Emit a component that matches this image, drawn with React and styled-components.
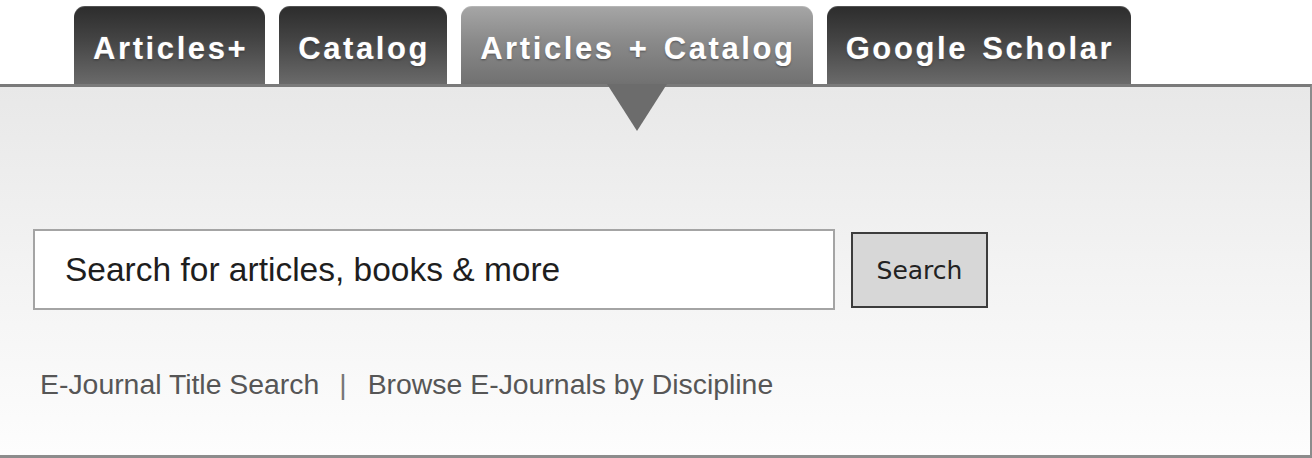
import React, { useState } from "react";
import styled, { createGlobalStyle } from "styled-components";

const GlobalStyle = createGlobalStyle`
  body {
    margin: 0;
    background: #ffffff;
    font-family: "Liberation Sans", Arial, sans-serif;
  }
`;

const Wrapper = styled.div`
  width: 1312px;
  height: 458px;
  overflow: hidden;
`;

const TabBar = styled.div`
  display: flex;
  gap: 14px;
  padding: 6px 0 0 74px;
  height: 84px;
  box-sizing: border-box;
`;

const Tab = styled.div`
  position: relative;
  box-sizing: border-box;
  height: 78px;
  padding: 27px 17px 0 19px;
  border-radius: 11px 11px 0 0;
  background: ${(props) =>
    props.active
      ? "linear-gradient(to bottom, #a6a6a6 0%, #8a8a8a 45%, #717171 100%)"
      : "linear-gradient(to bottom, #2c2c2c 0%, #454545 45%, #6a6a6a 100%)"};
  box-shadow: inset 0 1px 0 rgba(255, 255, 255, 0.18);
  color: #ffffff;
  font-family: "Liberation Sans", Arial, sans-serif;
  font-weight: bold;
  font-size: 31px;
  line-height: 31px;
  letter-spacing: 2.6px;
  word-spacing: 3px;
  white-space: nowrap;
  text-shadow: 0 0 2px rgba(255, 255, 255, 0.35), 0 1px 2px rgba(0, 0, 0, 0.55);
  cursor: pointer;

  &::after {
    content: "";
    display: ${(props) => (props.active ? "block" : "none")};
    position: absolute;
    top: 100%;
    left: 50%;
    margin-left: -30px;
    width: 0;
    height: 0;
    border-left: 30px solid transparent;
    border-right: 30px solid transparent;
    border-top: 47px solid #6c6c6c;
    z-index: 2;
  }
`;

const Panel = styled.div`
  box-sizing: border-box;
  height: 374px;
  border-top: 3px solid #7a7a7a;
  border-right: 2px solid #8c8c8c;
  border-bottom: 3px solid #8c8c8c;
  background: linear-gradient(to bottom, #e8e8e8 0%, #f3f3f3 50%, #fdfdfd 100%);
  padding: 142px 0 0 33px;
`;

const SearchRow = styled.form`
  display: flex;
  align-items: center;
  gap: 16px;
`;

const SearchInput = styled.input`
  box-sizing: border-box;
  width: 802px;
  height: 81px;
  border: 2px solid #a4a4a4;
  background: #ffffff;
  padding: 0 0 0 30px;
  font-family: "Liberation Sans", Arial, sans-serif;
  font-size: 33.5px;
  color: #1e1e1e;
  outline: none;

  &::placeholder {
    color: #1e1e1e;
    opacity: 1;
  }
`;

const SearchButton = styled.button`
  box-sizing: border-box;
  width: 137px;
  height: 76px;
  border: 2px solid #3c3c3c;
  background: #d7d7d7;
  font-family: "DejaVu Sans", Verdana, sans-serif;
  font-size: 25px;
  color: #222222;
  padding: 2px 0 0;
  cursor: pointer;
`;

const LinkRow = styled.div`
  display: flex;
  align-items: center;
  margin: 58px 0 0 7px;
  font-family: "Liberation Sans", Arial, sans-serif;
  font-size: 28.4px;
  color: #565656;
`;

const PanelLink = styled.a`
  color: inherit;
  text-decoration: none;
  cursor: pointer;
`;

const Separator = styled.span`
  margin: 0 21px 0 20px;
  color: #777777;
`;

const tabs = ["Articles+", "Catalog", "Articles + Catalog", "Google Scholar"];

const App = () => {
  const [activeTab, setActiveTab] = useState("Articles + Catalog");

  return (
    <Wrapper>
      <GlobalStyle />
      <TabBar>
        {tabs.map((tab) => (
          <Tab
            key={tab}
            active={activeTab === tab}
            onClick={() => setActiveTab(tab)}
          >
            {tab}
          </Tab>
        ))}
      </TabBar>
      <Panel>
        <SearchRow onSubmit={(e) => e.preventDefault()}>
          <SearchInput placeholder="Search for articles, books & more" />
          <SearchButton type="submit">Search</SearchButton>
        </SearchRow>
        <LinkRow>
          <PanelLink>E-Journal Title Search</PanelLink>
          <Separator>|</Separator>
          <PanelLink>Browse E-Journals by Discipline</PanelLink>
        </LinkRow>
      </Panel>
    </Wrapper>
  );
};

export default App;
